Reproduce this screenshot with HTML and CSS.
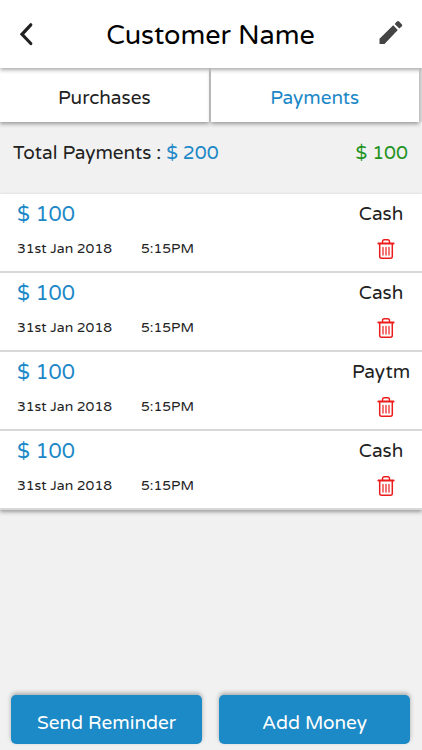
FILE: index.html
```html
<!DOCTYPE html>
<html lang="en">
<head>
<meta charset="utf-8">
<meta name="viewport" content="width=device-width, initial-scale=1">
<title>Customer Name</title>
<link rel="stylesheet" href="styles.css">
</head>
<body>
<svg class="sprite" aria-hidden="true">
  <symbol id="trash" viewBox="0 0 18 22">
    <g fill="none" stroke="currentColor">
      <path stroke-width="1.4" d="M5.500 5V3.700Q5.500 1.700 7.300 1.700h3.400q1.800 0 1.800 2V5"/>
      <path stroke-width="2.200" stroke-linecap="round" d="M1.500 5.500h15"/>
      <path stroke-width="1.500" d="M2.700 6v12.600Q2.700 20.300 4.500 20.300h9q1.800 0 1.800-1.700V6"/>
      <path stroke-width="1.200" stroke-linecap="round" d="M6 9.300v7.800M9 9.300v7.800M12 9.300v7.800"/>
    </g>
  </symbol>
</svg>
<div class="screen">
  <header class="header">
    <button class="icon-button" type="button" aria-label="Back">
      <svg width="16" height="26" viewBox="0 0 16 26"><path d="M12.800 3.800L4 13.300l8.800 9.200" fill="none" stroke="#222" stroke-width="3.200" stroke-linecap="round"/></svg>
    </button>
    <h1 class="title">Customer Name</h1>
    <button class="icon-button" type="button" aria-label="Edit">
      <svg width="24" height="26" viewBox="0 1 24 26"><path fill="#444" d="M.5 24v-5.200L14.200 5.300l4.600 4.600L5.500 24zM15.700 3.900l2.200-2.300q1.100-1.100 2.200 0l2.600 2.600q1.100 1.100 0 2.200l-2.400 2.100z"/></svg>
    </button>
  </header>
  <nav class="tabs">
    <a class="tab" href="#purchases">Purchases</a>
    <a class="tab tab-active" href="#payments" aria-current="page">Payments</a>
  </nav>
  <main class="content">
    <section class="summary">
      <p>Total Payments : <span class="blue">$ 200</span></p>
      <p class="green">$ 100</p>
    </section>
    <ul class="payments">
      <li class="payment">
        <span class="amount">$ 100</span><span class="method">Cash</span>
        <span class="when"><span>31st Jan 2018</span><span>5:15PM</span></span>
        <button class="delete" type="button" aria-label="Delete payment"><svg width="18" height="22"><use href="#trash"/></svg></button>
      </li>
      <li class="payment">
        <span class="amount">$ 100</span><span class="method">Cash</span>
        <span class="when"><span>31st Jan 2018</span><span>5:15PM</span></span>
        <button class="delete" type="button" aria-label="Delete payment"><svg width="18" height="22"><use href="#trash"/></svg></button>
      </li>
      <li class="payment">
        <span class="amount">$ 100</span><span class="method">Paytm</span>
        <span class="when"><span>31st Jan 2018</span><span>5:15PM</span></span>
        <button class="delete" type="button" aria-label="Delete payment"><svg width="18" height="22"><use href="#trash"/></svg></button>
      </li>
      <li class="payment">
        <span class="amount">$ 100</span><span class="method">Cash</span>
        <span class="when"><span>31st Jan 2018</span><span>5:15PM</span></span>
        <button class="delete" type="button" aria-label="Delete payment"><svg width="18" height="22"><use href="#trash"/></svg></button>
      </li>
    </ul>
  </main>
  <footer class="actions">
    <button class="action" type="button">Send Reminder</button>
    <button class="action" type="button">Add Money</button>
  </footer>
</div>
</body>
</html>
```
FILE: styles.css
```css
* { box-sizing: border-box; }
body {
  margin: 0;
  background: #f1f1f1;
  color: #222;
  font-family: "Varela Round", "Noto Sans", sans-serif;
  font-size: 19px;
  line-height: 24px;
}
h1, p, ul { margin: 0; padding: 0; }
button { font: inherit; border: 0; background: none; padding: 0; cursor: pointer; }
svg { display: block; }
.sprite { display: none; }
.blue { color: #1c88c7; }
.green { color: #229322; }
.screen { display: flex; flex-direction: column; min-height: 100vh; }
.header {
  position: relative;
  z-index: 1;
  display: flex;
  align-items: center;
  justify-content: space-between;
  padding: 18px 19px 14px 18px;
  background: #fff;
  box-shadow: 0 2px 4px #aaa;
}
.icon-button { display: flex; width: 24px; height: 30px; }
.title { font-size: 27px; line-height: 36px; font-weight: 400; color: #000; }
.tabs { display: flex; gap: 2px; padding-right: 3px; background: #ddd; }
.tab {
  flex: 1;
  padding: 18px 0 12px;
  background: #fff;
  box-shadow: 0 2px 4px #999;
  color: #222;
  text-align: center;
  text-decoration: none;
}
.tab-active { color: #1c88c7; }
.content { flex: 1; }
.summary { display: flex; justify-content: space-between; padding: 19px 14px 29px 13px; }
.payments { list-style: none; box-shadow: 0 2px 4px #999; }
.payment {
  display: grid;
  grid-template-columns: 1fr 58px;
  row-gap: 10px;
  padding: 9px 12px 10px 17px;
  background: #fff;
  border-bottom: 2px solid #d8d8d8;
}
.amount { font-size: 21px; color: #1c88c7; }
.method { line-height: 22px; text-align: center; }
.when { display: flex; gap: 29px; font-size: 14px; }
.delete { justify-self: center; align-self: center; padding-left: 10px; color: #ed1c1c; }
.actions { display: flex; gap: 17px; padding: 11px 12px 6px 11px; }
.action {
  flex: 1;
  padding: 16px 0 9px;
  border-radius: 5px;
  background: #1c8ac6;
  box-shadow: 0 -2px 4px #aaa;
  color: #fff;
}
```
